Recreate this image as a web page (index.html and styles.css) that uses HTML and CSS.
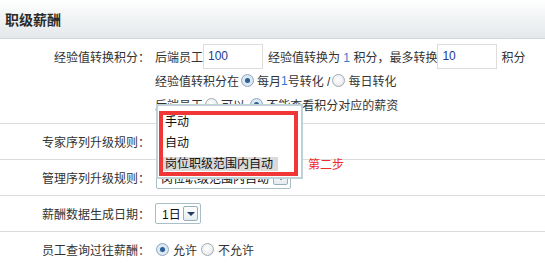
FILE: index.html
```html
<!DOCTYPE html>
<html lang="zh-CN">
<head>
<meta charset="utf-8">
<title>职级薪酬</title>
<link rel="stylesheet" href="styles.css">
</head>
<body>
<div class="page">
  <div class="header"><h1 class="title">职级薪酬</h1></div>
  <div class="form">
    <div class="row row-multi">
      <div class="label label-top">经验值转换积分：</div>
      <div class="content content-col">
        <div class="line line1">后端员工<span class="input">100</span><span class="mid">经验值转换为 <span class="num">1</span> 积分，最多转换</span><span class="input">10</span><span class="tail">积分</span></div>
        <div class="line line2">经验值转积分在<span class="radio on"></span>每月<span class="num">1</span>号转化 /<span class="radio"></span>每日转化</div>
        <div class="line line3">后端员工<span class="radio"></span>可以 <span class="radio on"></span>不能查看积分对应的薪资</div>
      </div>
    </div>
    <div class="row">
      <div class="label">专家序列升级规则：</div>
      <div class="content"></div>
    </div>
    <div class="row">
      <div class="label">管理序列升级规则：</div>
      <div class="content">
        <div class="select select-wide"><span class="select-text">岗位职级范围内自动</span><span class="arrow"></span></div>
      </div>
    </div>
    <div class="row">
      <div class="label">薪酬数据生成日期：</div>
      <div class="content">
        <div class="select select-day"><span class="select-text">1日</span><span class="arrow"></span></div>
      </div>
    </div>
    <div class="row">
      <div class="label">员工查询过往薪酬：</div>
      <div class="content">
        <span class="radio on first"></span>允许<span class="radio second"></span>不允许
      </div>
    </div>
  </div>

  <div class="dropdown">
    <div class="option"><span>手动</span></div>
    <div class="option"><span>自动</span></div>
    <div class="option option-active"><span>岗位职级范围内自动</span></div>
  </div>
  <div class="mark"></div>
  <div class="note">第二步</div>
</div>
</body>
</html>
```

FILE: styles.css
```css
html, body {
  margin: 0;
  padding: 0;
  background: #fff;
}
body {
  font-family: "Liberation Sans", "Noto Sans CJK SC", sans-serif;
  font-size: 12px;
  color: #333;
}
.page {
  position: relative;
  width: 545px;
  height: 267px;
  overflow: hidden;
}
.header {
  height: 38px;
  border-bottom: 1px solid #d3d7da;
  background: linear-gradient(to bottom, #ffffff 0%, #f3f5f6 40%, #e5e8ea 100%);
  display: flex;
  align-items: center;
  padding-left: 5px;
}
.title {
  margin: 0;
  font-size: 14px;
  font-weight: bold;
  color: #2a2a2a;
}
.row {
  display: flex;
  height: 35px;
  border-bottom: 1px solid #dcdcdc;
}
.row-multi {
  box-sizing: border-box;
  padding-top: 5px;
  height: 85px;
}
.label {
  width: 150px;
  flex-shrink: 0;
  display: flex;
  align-items: center;
  justify-content: flex-end;
  white-space: nowrap;
}
.label-top {
  height: 25px;
}
.content {
  padding-left: 5px;
  display: flex;
  align-items: center;
  white-space: nowrap;
}
.content-col {
  flex-direction: column;
  align-items: flex-start;
}
.line {
  display: flex;
  align-items: center;
  white-space: pre;
}
.line1 { height: 25px; }
.line2 { height: 23px; }
.line3 { height: 24px; }
.input {
  display: inline-block;
  box-sizing: border-box;
  width: 60px;
  height: 25px;
  line-height: 23px;
  border: 1px solid #dddddd;
  padding-left: 4px;
  color: #1b3c8f;
}
.mid {
  margin-left: 5px;
}
.tail {
  margin-left: 4px;
}
.num {
  color: #2f7bcf;
}
.radio {
  display: inline-block;
  box-sizing: border-box;
  width: 13px;
  height: 13px;
  border-radius: 50%;
  border: 1px solid #a3abb2;
  background: radial-gradient(circle at 45% 40%, #ffffff 0%, #eceef0 60%, #d5d9dc 100%);
  margin: 0 3px 0 2px;
  position: relative;
  flex-shrink: 0;
}
.radio.on {
  border-color: #8fa6bb;
  background: radial-gradient(circle at 50% 50%, #c9def0 0%, #dfeaf4 60%, #c4d3e0 100%);
}
.radio.on::after {
  content: "";
  position: absolute;
  left: 3px;
  top: 3px;
  width: 5px;
  height: 5px;
  border-radius: 50%;
  background: #2c5e96;
}
.radio.first {
  margin: 0 4px 0 1px;
}
.radio.second {
  margin: 0 4px 0 4px;
}
.select {
  box-sizing: border-box;
  height: 22px;
  border: 1px solid #a8bfc9;
  border-radius: 2px;
  display: flex;
  align-items: center;
  justify-content: space-between;
  padding: 0 2px 0 6px;
  color: #111;
  background: #fff;
}
.select-day {
  width: 46px;
  height: 21px;
}
.select-wide {
  width: 135px;
  margin-left: 1px;
  padding-left: 4px;
}
.arrow {
  display: inline-block;
  box-sizing: border-box;
  width: 15px;
  height: 15px;
  border: 1px solid #98afbb;
  border-radius: 2px;
  background: linear-gradient(to bottom, #ffffff, #e4ecf1);
  position: relative;
}
.arrow::after {
  content: "";
  position: absolute;
  left: 3px;
  top: 5px;
  border-left: 4px solid transparent;
  border-right: 4px solid transparent;
  border-top: 4px solid #1e3a66;
}
.dropdown {
  position: absolute;
  left: 156px;
  top: 104px;
  width: 147px;
  height: 75px;
  box-sizing: border-box;
  border: 2px solid #c0d1d8;
  background: #fff;
  padding-top: 5px;
  padding-left: 3px;
  color: #111;
}
.option {
  height: 21px;
  display: flex;
  align-items: center;
}
.option span {
  padding: 0 5px 0 4px;
  line-height: 14px;
}
.option-active span {
  background: #dadada;
}
.mark {
  position: absolute;
  left: 159px;
  top: 111px;
  width: 139px;
  height: 65px;
  box-sizing: border-box;
  border: 4px solid #f03636;
}
.note {
  position: absolute;
  left: 308px;
  top: 157px;
  color: #ef2b2b;
  font-size: 12px;
  line-height: 16px;
}
```
